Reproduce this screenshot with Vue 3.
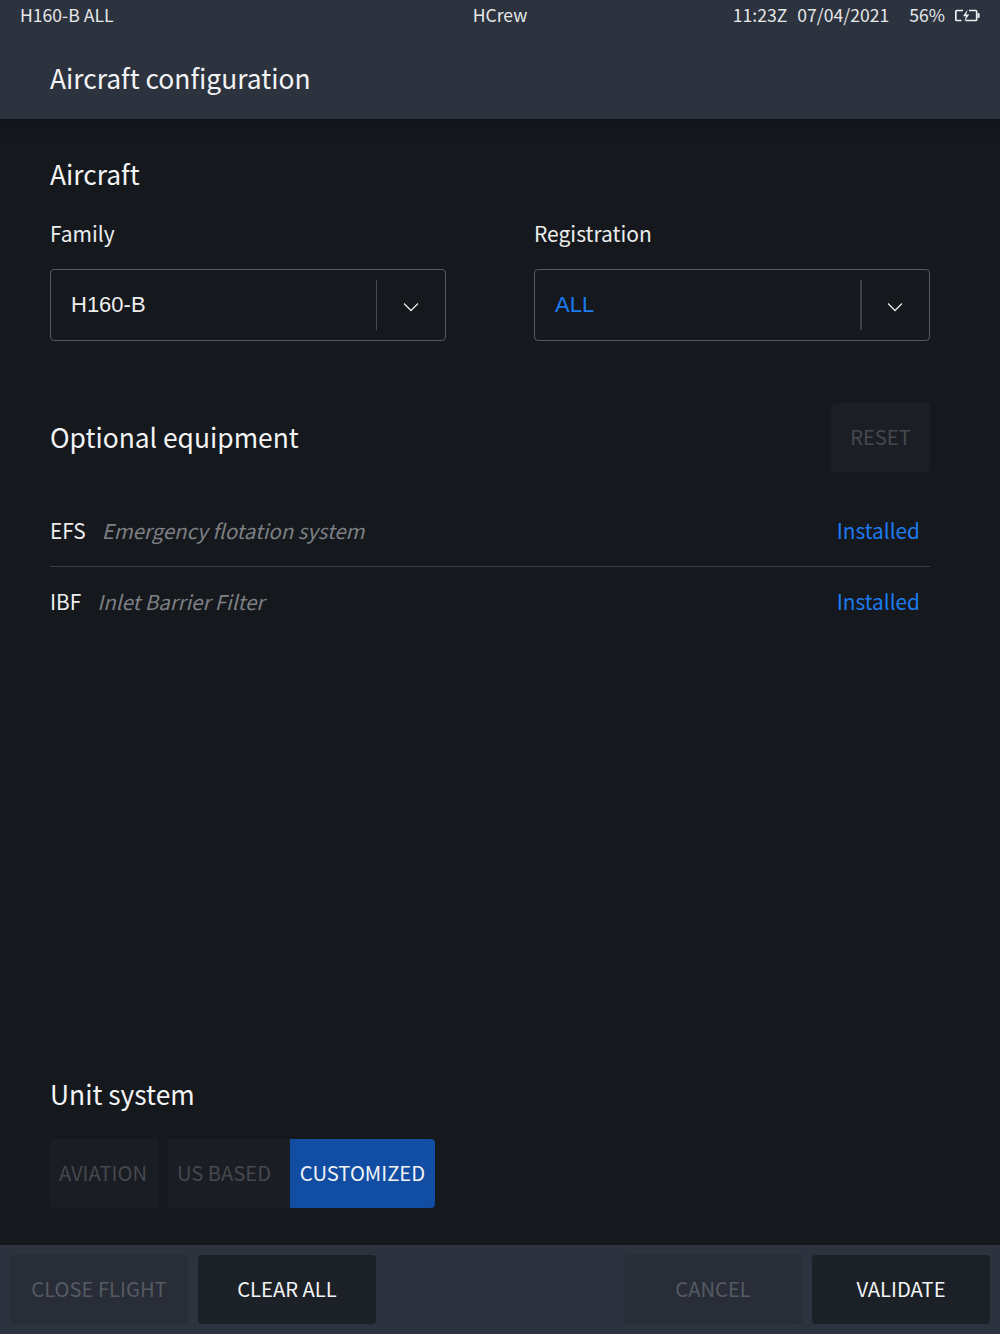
<script setup>
const rows = [
  { code: 'EFS', name: 'Emergency flotation system', state: 'Installed' },
  { code: 'IBF', name: 'Inlet Barrier Filter', state: 'Installed' },
]
const selects = [
  { label: 'Family', value: 'H160-B', blue: false },
  { label: 'Registration', value: 'ALL', blue: true },
]
</script>

<template>
  <div class="app">
    <header class="top">
      <div class="status">
        <span class="st-left">H160-B ALL</span>
        <span class="st-mid">HCrew</span>
        <div class="st-right">
          <span>11:23Z</span>
          <span class="date">07/04/2021</span>
          <span class="pct">56%</span>
          <svg class="batt" width="25" height="13" viewBox="0 0 25 13" fill="none">
            <path d="M8 1.5H1.8a1 1 0 0 0-1 1v8a1 1 0 0 0 1 1H6.5M14 1.5h6.7a1 1 0 0 1 1 1v8a1 1 0 0 1-1 1H10.5" stroke="#f0f1f2" stroke-width="1.7"/>
            <path d="M22.6 4.2h2v4.6h-2z" fill="#f0f1f2"/>
            <path d="M12.6 .6 8 7.2h2.9l-1.5 5.2 4.8-6.8h-3z" fill="#f0f1f2"/>
          </svg>
        </div>
      </div>
      <h1 class="title">Aircraft configuration</h1>
    </header>

    <main class="main">
      <section class="aircraft">
        <h2 class="h">Aircraft</h2>
        <div class="selects">
          <div v-for="s in selects" :key="s.label" class="field">
            <label class="lab">{{ s.label }}</label>
            <div class="select">
              <span class="val" :class="{ blue: s.blue }">{{ s.value }}</span>
              <span class="sep"></span>
              <svg class="chev" width="16" height="10" viewBox="0 0 16 10" fill="none">
                <path d="M1 1.5 8 8.5 15 1.5" stroke="#e8e9ea" stroke-width="1.3"/>
              </svg>
            </div>
          </div>
        </div>
      </section>

      <section class="equip">
        <div class="equip-head">
          <h2 class="h h-eq">Optional equipment</h2>
          <div class="reset">RESET</div>
        </div>
        <div v-for="r in rows" :key="r.code" class="row">
          <span class="code">{{ r.code }}</span>
          <span class="name">{{ r.name }}</span>
          <span class="state">{{ r.state }}</span>
        </div>
      </section>

      <section class="units">
        <h2 class="h">Unit system</h2>
        <div class="seg">
          <div class="seg-btn s1">AVIATION</div>
          <div class="seg-btn s2">US BASED</div>
          <div class="seg-btn s3">CUSTOMIZED</div>
        </div>
      </section>
    </main>

    <footer class="foot">
      <div class="btn off">CLOSE FLIGHT</div>
      <div class="btn on">CLEAR ALL</div>
      <div class="spacer"></div>
      <div class="btn off">CANCEL</div>
      <div class="btn on">VALIDATE</div>
    </footer>
  </div>
</template>

<style scoped>
.app {
  width: 1000px;
  height: 1334px;
  display: flex;
  flex-direction: column;
  background: #15181d;
  color: #f2f3f4;
  font-family: "Noto Sans CJK SC", "Noto Sans", sans-serif;
  overflow: hidden;
}
.top {
  height: 119px;
  background: #2c323e;
  flex: none;
}
.status {
  height: 30px;
  padding: 0 20px;
  display: grid;
  grid-template-columns: 1fr auto 1fr;
  align-items: center;
  font-size: 17.6px;
  color: #e6e7e9;
  line-height: 30px;
}
.st-right {
  display: flex;
  justify-content: flex-end;
  align-items: center;
}
.date { margin-left: 10px; }
.pct { margin-left: 20px; }
.batt { margin-left: 10px; }
.title {
  margin: 0;
  padding: 27px 50px 0;
  font-size: 26.4px;
  font-weight: 400;
  line-height: 42px;
}
.main {
  flex: 1;
  display: flex;
  flex-direction: column;
  padding: 0 70px 0 50px;
  background: linear-gradient(#111418, #15181d 24px);
  min-height: 0;
}
.h {
  margin: 0;
  font-size: 26.4px;
  font-weight: 400;
  line-height: 42px;
}
.h-eq { padding-bottom: 2px; }
.aircraft { padding-top: 34px; }
.selects {
  margin-top: 21px;
  display: grid;
  grid-template-columns: 396px 396px;
  column-gap: 88px;
  width: 880px;
}
.lab {
  display: block;
  font-size: 21px;
  line-height: 34px;
  color: #eceded;
}
.select {
  margin-top: 19px;
  height: 72px;
  box-sizing: border-box;
  border: 1.5px solid #55585c;
  border-radius: 4px;
  display: flex;
  align-items: center;
  padding-left: 20px;
}
.val {
  flex: 1;
  font-family: "Liberation Sans", sans-serif;
  font-size: 22px;
  color: #eceded;
}
.val.blue { color: #1c7bf0; }
.sep {
  width: 1px;
  height: 50px;
  background: #44474c;
}
.field:last-child .sep { width: 2px; margin-right: -1px; background: #3c3f44; }
.chev { margin: 4px 26px 0 26px; }
.equip { width: 880px; padding-top: 62px; }
.equip-head {
  display: flex;
  justify-content: space-between;
  align-items: center;
  margin-bottom: 24px;
}
.reset {
  width: 99px;
  height: 69px;
  box-sizing: border-box;
  padding-bottom: 2px;
  border-radius: 4px;
  background: #1b1f25;
  color: #45484d;
  font-size: 20.2px;
  display: flex;
  align-items: center;
  justify-content: center;
}
.row {
  height: 70px;
  display: flex;
  align-items: center;
  padding-right: 10px;
  padding-bottom: 2px;
  box-sizing: border-box;
  font-size: 20.8px;
}
.row + .row { border-top: 1px solid #3c3f44; }
.code { color: #eceded; }
.name {
  flex: 1;
  margin-left: 16px;
  font-size: 20.4px;
  font-style: italic;
  color: #7d8084;
}
.state { color: #1c7bf0; }
.units { margin-top: auto; padding-bottom: 37px; }
.seg {
  margin-top: 24px;
  display: flex;
  height: 69px;
}
.seg-btn {
  display: flex;
  align-items: center;
  justify-content: center;
  font-size: 20.2px;
  background: #1a1d24;
  color: #45484d;
  padding-bottom: 2px;
  box-sizing: border-box;
}
.s1 { width: 108px; border-radius: 4px 0 0 4px; margin-right: 10px; padding-right: 2px; }
.s2 { width: 122px; padding-right: 10px; }
.s3 { width: 145px; background: #104da3; color: #f2f3f4; border-radius: 0 4px 4px 0; }
.foot {
  flex: none;
  height: 89px;
  box-sizing: border-box;
  background: #2c323e;
  display: flex;
  padding: 10px;
  gap: 10px;
}
.spacer { flex: 1; }
.btn {
  width: 178px;
  height: 69px;
  box-sizing: border-box;
  padding-bottom: 2px;
  border-radius: 4px;
  display: flex;
  align-items: center;
  justify-content: center;
  font-size: 20.2px;
}
.off { background: #282d37; color: #565a62; }
.on { background: #1c2027; color: #f2f3f4; }
</style>
